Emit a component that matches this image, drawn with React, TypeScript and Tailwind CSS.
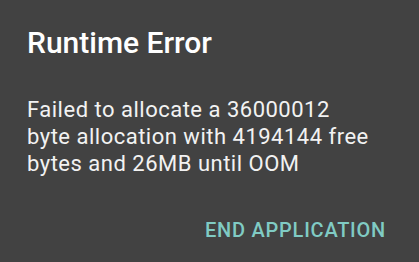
export default function App() {
  return (
    <main className="h-[262px] w-[419px] overflow-hidden bg-[#424242] font-['Roboto',sans-serif]">
      <div className="flex flex-col pl-[27px] pr-[33px] pt-[25px]">
        <h1 className="text-[30px] leading-[36px] font-medium text-white">Runtime Error</h1>
        <p className="mt-[35px] whitespace-nowrap text-[22px] leading-[27px] tracking-[0.5px] text-[#f2f2f2]">
          Failed to allocate a 36000012
          <br />
          byte allocation with 4194144 free
          <br />
          bytes and 26MB until OOM
        </p>
        <div className="mt-[41px] flex justify-end">
          <button className="text-[20px] leading-[24px] font-medium tracking-[0.75px] text-[#80cbc4]">END APPLICATION</button>
        </div>
      </div>
    </main>
  )
}
